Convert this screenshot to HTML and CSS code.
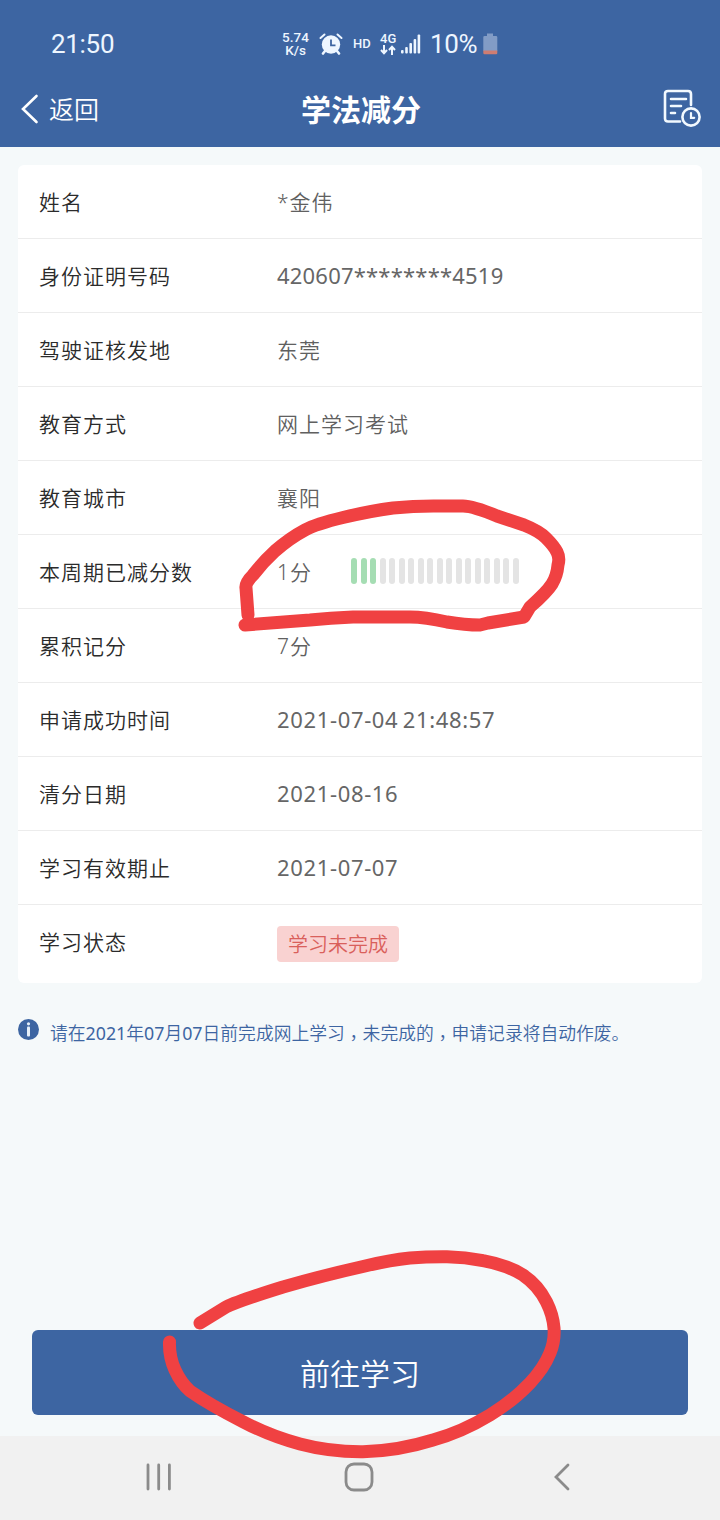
FILE: index.html
```html
<!DOCTYPE html>
<html lang="zh-CN">
<head>
    <meta charset="UTF-8">
    <meta name="viewport" content="width=device-width, initial-scale=1.0">
    <title>学法减分</title>
    <link rel="stylesheet" href="styles.css">
</head>
<body>
    <div class="page">
        <header class="header">
            <div class="status-bar">
                <span class="time">21:50</span>
                <div class="speed"><span>5.74</span><span>K/s</span></div>
                <svg class="alarm" width="24" height="22" viewBox="0 0 24 22">
                    <g stroke="#eef6ff" stroke-linecap="round" fill="none">
                        <path d="M1.5 5L5.5 1.5M22.5 5L18.5 1.5" stroke-width="2"/>
                        <path d="M6 18L4 20.5M18 18L20 20.5" stroke-width="2.6"/>
                    </g>
                    <circle cx="12" cy="11.5" r="9.2" fill="#eef6ff"/>
                    <path d="M12 6.5V12.3H16.5" stroke="#3d65a2" stroke-width="1.8" fill="none"/>
                </svg>
                <span class="hd">HD</span>
                <div class="network">
                    <span>4G</span>
                    <svg width="16" height="10" viewBox="0 0 16 10" fill="none" stroke="#eef6ff" stroke-width="2">
                        <path d="M4 0V8M1 5L4 8.2L7 5M12 10V2M9 5L12 1.8L15 5"/>
                    </svg>
                </div>
                <svg class="signal" width="20" height="20" viewBox="0 0 20 20" fill="#eef6ff">
                    <rect x="0" y="16" width="2.6" height="3.5" rx="1"/>
                    <rect x="4.2" y="13" width="2.6" height="6.5" rx="1"/>
                    <rect x="8.4" y="9" width="2.6" height="10.5" rx="1"/>
                    <rect x="12.6" y="5" width="2.6" height="14.5" rx="1"/>
                    <rect x="16.6" y="0.5" width="2.6" height="19" rx="1"/>
                </svg>
                <span class="percent">10%</span>
                <svg class="battery" width="15" height="22" viewBox="0 0 15 22">
                    <path d="M4 0.5H10V3H13Q14.3 3 14.3 4.3V18H0.3V4.3Q0.3 3 1.6 3H4Z" fill="#829cc6"/>
                    <path d="M0.3 17.5H14.3V20Q14.3 21.3 13 21.3H1.6Q0.3 21.3 0.3 20Z" fill="#cf7d72"/>
                </svg>
            </div>
            <div class="title-bar">
                <a class="back" href="#">
                    <svg width="18" height="30" viewBox="0 0 18 30" fill="none" stroke="#fff" stroke-width="2.6" stroke-linecap="round">
                        <path d="M15.5 2L2 15L15.5 28"/>
                    </svg>
                    <span>返回</span>
                </a>
                <h1>学法减分</h1>
                <a class="history" href="#">
                    <svg width="38" height="38" viewBox="0 0 38 38" fill="none" stroke="#f2f9ff" stroke-width="2.6" stroke-linecap="round">
                        <path d="M17 32.5H5Q2 32.5 2 29.5V5Q2 2 5 2H25Q28 2 28 5V16"/>
                        <path d="M8 10H23M8 17H18M8 24H12"/>
                        <circle cx="28" cy="28" r="8.6"/>
                        <path d="M28 24V28.8H31.2" stroke-width="2.2"/>
                    </svg>
                </a>
            </div>
        </header>

        <main class="content">
            <div class="card">
                <div class="row"><span class="label">姓名</span><span class="value">*金伟</span></div>
                <div class="row"><span class="label">身份证明号码</span><span class="value number id-number">420607********4519</span></div>
                <div class="row"><span class="label">驾驶证核发地</span><span class="value">东莞</span></div>
                <div class="row"><span class="label">教育方式</span><span class="value">网上学习考试</span></div>
                <div class="row"><span class="label">教育城市</span><span class="value">襄阳</span></div>
                <div class="row">
                    <span class="label">本周期已减分数</span>
                    <span class="value score">1分</span>
                    <div class="progress">
                        <i class="on"></i><i class="on"></i><i class="on"></i><i></i><i></i><i></i>
                        <i></i><i></i><i></i><i></i><i></i><i></i>
                        <i></i><i></i><i></i><i></i><i></i><i></i>
                    </div>
                </div>
                <div class="row"><span class="label">累积记分</span><span class="value">7分</span></div>
                <div class="row"><span class="label">申请成功时间</span><span class="value number">2021-07-04 21:48:57</span></div>
                <div class="row"><span class="label">清分日期</span><span class="value number">2021-08-16</span></div>
                <div class="row"><span class="label">学习有效期止</span><span class="value number">2021-07-07</span></div>
                <div class="row last"><span class="label">学习状态</span><span class="tag">学习未完成</span></div>
            </div>

            <div class="notice">
                <svg width="21" height="21" viewBox="0 0 21 21">
                    <circle cx="10.5" cy="10.5" r="10.5" fill="#3d65a2"/>
                    <circle cx="10.5" cy="4.8" r="1.6" fill="#e6f0fa"/>
                    <rect x="9" y="7.5" width="3" height="10" rx="1" fill="#e6f0fa"/>
                </svg>
                <p>请在<b>2021</b>年<b>07</b>月<b>07</b>日前完成网上学习<span class="comma" lang="zh-TW">，</span>未完成的<span class="comma" lang="zh-TW">，</span>申请记录将自动作废。</p>
            </div>
        </main>

        <div class="footer">
            <button class="study-btn">前往学习</button>
        </div>

        <nav class="nav-bar">
            <svg width="26" height="28" viewBox="0 0 26 28" stroke="#8b8b8b" stroke-width="2.8" stroke-linecap="round">
                <path d="M2 2V26M12.7 2V26M23.4 2V26"/>
            </svg>
            <svg class="home" width="30" height="30" viewBox="0 0 30 30" fill="none" stroke="#8b8b8b" stroke-width="2.8">
                <rect x="2" y="2" width="26" height="26" rx="8"/>
            </svg>
            <svg width="18" height="28" viewBox="0 0 18 28" fill="none" stroke="#8b8b8b" stroke-width="2.8" stroke-linecap="round">
                <path d="M15 2L3 14L15 26"/>
            </svg>
        </nav>

        <!-- red pen marks -->
        <svg class="marks" width="720" height="1520" viewBox="0 0 720 1520">
            <path d="M248 615L246 588Q245 583 253 575Q263 562 275 551Q290 538 305 530Q316 524 343 517.5Q370 511 393 508Q415 505.8 437 506H463Q473 506 497 516L524 525Q539 531 546 538Q554 546 557 552Q560 558 558 565Q557 576 552 584Q547 592 530 607L524 617L488 623L480 625Q465 625 447 622Q425 617 410 617H353Q330 618 310 620L245 625"/>
            <path d="M200 1323L226 1307Q238 1301 283 1287Q325 1275 363 1266.5Q390 1260 410 1258Q428 1256.5 447 1256.7Q465 1257 483 1260.7Q507 1265 523 1275Q538 1285 546.5 1302Q553 1315 554 1328Q555 1341 550 1353Q544 1368 530 1383Q513 1401 490 1415Q462 1432 433 1440Q398 1451 363 1451.7Q330 1452 300 1444Q270 1436 243 1421.7Q210 1405 190 1391Q181 1383 175 1370Q169 1357 169.5 1342"/>
        </svg>
    </div>
</body>
</html>
```
FILE: styles.css
```css
* {
    box-sizing: border-box;
}

body {
    margin: 0;
    font-family: "Noto Sans", "Noto Sans CJK SC", sans-serif;
    font-weight: 350;
    background: #f5f9fa;
}

.page {
    position: relative;
    display: flex;
    flex-direction: column;
    width: 720px;
    height: 1520px;
    overflow: hidden;
}

svg {
    display: block;
    flex: none;
}

/* Header */
.header {
    height: 147px;
    background: #3d65a2;
    color: #fff;
}

.status-bar {
    display: flex;
    align-items: center;
    height: 72px;
    padding: 15px 0 0 51px;
    color: #eef6ff;
    font-family: Roboto, sans-serif;
    font-weight: 400;
    white-space: nowrap;
}

.time {
    width: 230px;
    font-size: 26px;
    line-height: 30px;
    letter-spacing: -0.3px;
}

.speed {
    display: flex;
    flex-direction: column;
    align-items: center;
    width: 29px;
    padding-top: 1px;
    font-size: 13.5px;
    font-weight: 500;
    line-height: 13px;
}

.alarm {
    margin-left: 9px;
}

.hd {
    width: 19px;
    margin-left: 10px;
    font-size: 13px;
    font-weight: 500;
    line-height: 16px;
}

.network {
    width: 16px;
    margin-left: 8px;
    font-size: 13px;
    font-weight: 500;
    line-height: 12px;
}

.network span {
    display: block;
}

.signal {
    margin-left: 5px;
}

.percent {
    width: 53px;
    margin-left: 9px;
    font-size: 26px;
    line-height: 30px;
    letter-spacing: -0.3px;
}

.title-bar {
    display: grid;
    grid-template-columns: 1fr auto 1fr;
    align-items: center;
    height: 73px;
    padding: 0 19px 0 21px;
}

.back {
    display: flex;
    align-items: center;
    gap: 10px;
    color: #fff;
    font-size: 25px;
    line-height: 36px;
    text-decoration: none;
}

.title-bar h1 {
    margin: 0;
    padding-top: 2px;
    font-size: 30px;
    font-weight: 700;
    line-height: 40px;
}

.history {
    justify-self: end;
    padding-bottom: 2px;
}

/* Info card */
.content {
    flex: 1;
    padding: 18px 18px 0;
}

.card {
    background: #fff;
    border-radius: 6px;
}

.row {
    display: flex;
    align-items: center;
    height: 74px;
    padding-left: 21px;
    padding-bottom: 1px;
    border-bottom: 1px solid #ececec;
    font-size: 21px;
    line-height: 30px;
    letter-spacing: 1px;
}

.row.last {
    height: 78px;
    padding-bottom: 0;
    border-bottom: none;
}

.label {
    width: 238px;
    padding-top: 2px;
    color: #2b2b2b;
}

.row.last .label {
    padding: 0 0 4px;
}

.value {
    padding-top: 2px;
    color: #606060;
}

.number {
    padding-top: 0;
    color: #666;
    font-size: 22px;
    font-weight: 400;
    letter-spacing: 0.65px;
    word-spacing: -2px;
}

.id-number {
    letter-spacing: 0.2px;
}

.score {
    width: 74px;
}

.progress {
    display: flex;
    gap: 3.5px;
}

.progress i {
    width: 6px;
    height: 26px;
    border-radius: 3px;
    background: #e4e4e4;
}

.progress .on {
    background: #a5ddb3;
}

.tag {
    height: 36px;
    padding: 1px 11px 0;
    border-radius: 4px;
    background: #f9d2d1;
    color: #d9605b;
    font-size: 20px;
    line-height: 36px;
    letter-spacing: 0;
}

/* Notice */
.notice {
    display: flex;
    gap: 11px;
    margin-top: 36px;
    color: #3d65a2;
}

.notice p {
    margin: 1px 0 0;
    font-size: 17.8px;
    line-height: 26px;
    white-space: nowrap;
}

.notice b {
    font-weight: 400;
}

.comma {
    font-family: "Noto Sans CJK TC", sans-serif;
    line-height: 1;
    vertical-align: -5px;
}

/* Bottom button */
.footer {
    padding: 0 32px 21px;
}

.study-btn {
    display: block;
    width: 100%;
    height: 85px;
    padding: 0 0 2px;
    border: none;
    border-radius: 6px;
    background: #3d65a2;
    color: #fff;
    font-family: inherit;
    font-size: 30px;
    font-weight: 350;
}

.nav-bar {
    display: flex;
    justify-content: space-between;
    align-items: center;
    height: 84px;
    padding: 0 149px 3px 146px;
    background: #f1f1f1;
}

.home {
    margin-right: 7px;
}

.marks {
    position: absolute;
    top: 0;
    left: 0;
    fill: none;
    stroke: #f04142;
    stroke-width: 13;
    stroke-linecap: round;
    stroke-linejoin: round;
    pointer-events: none;
}
```
